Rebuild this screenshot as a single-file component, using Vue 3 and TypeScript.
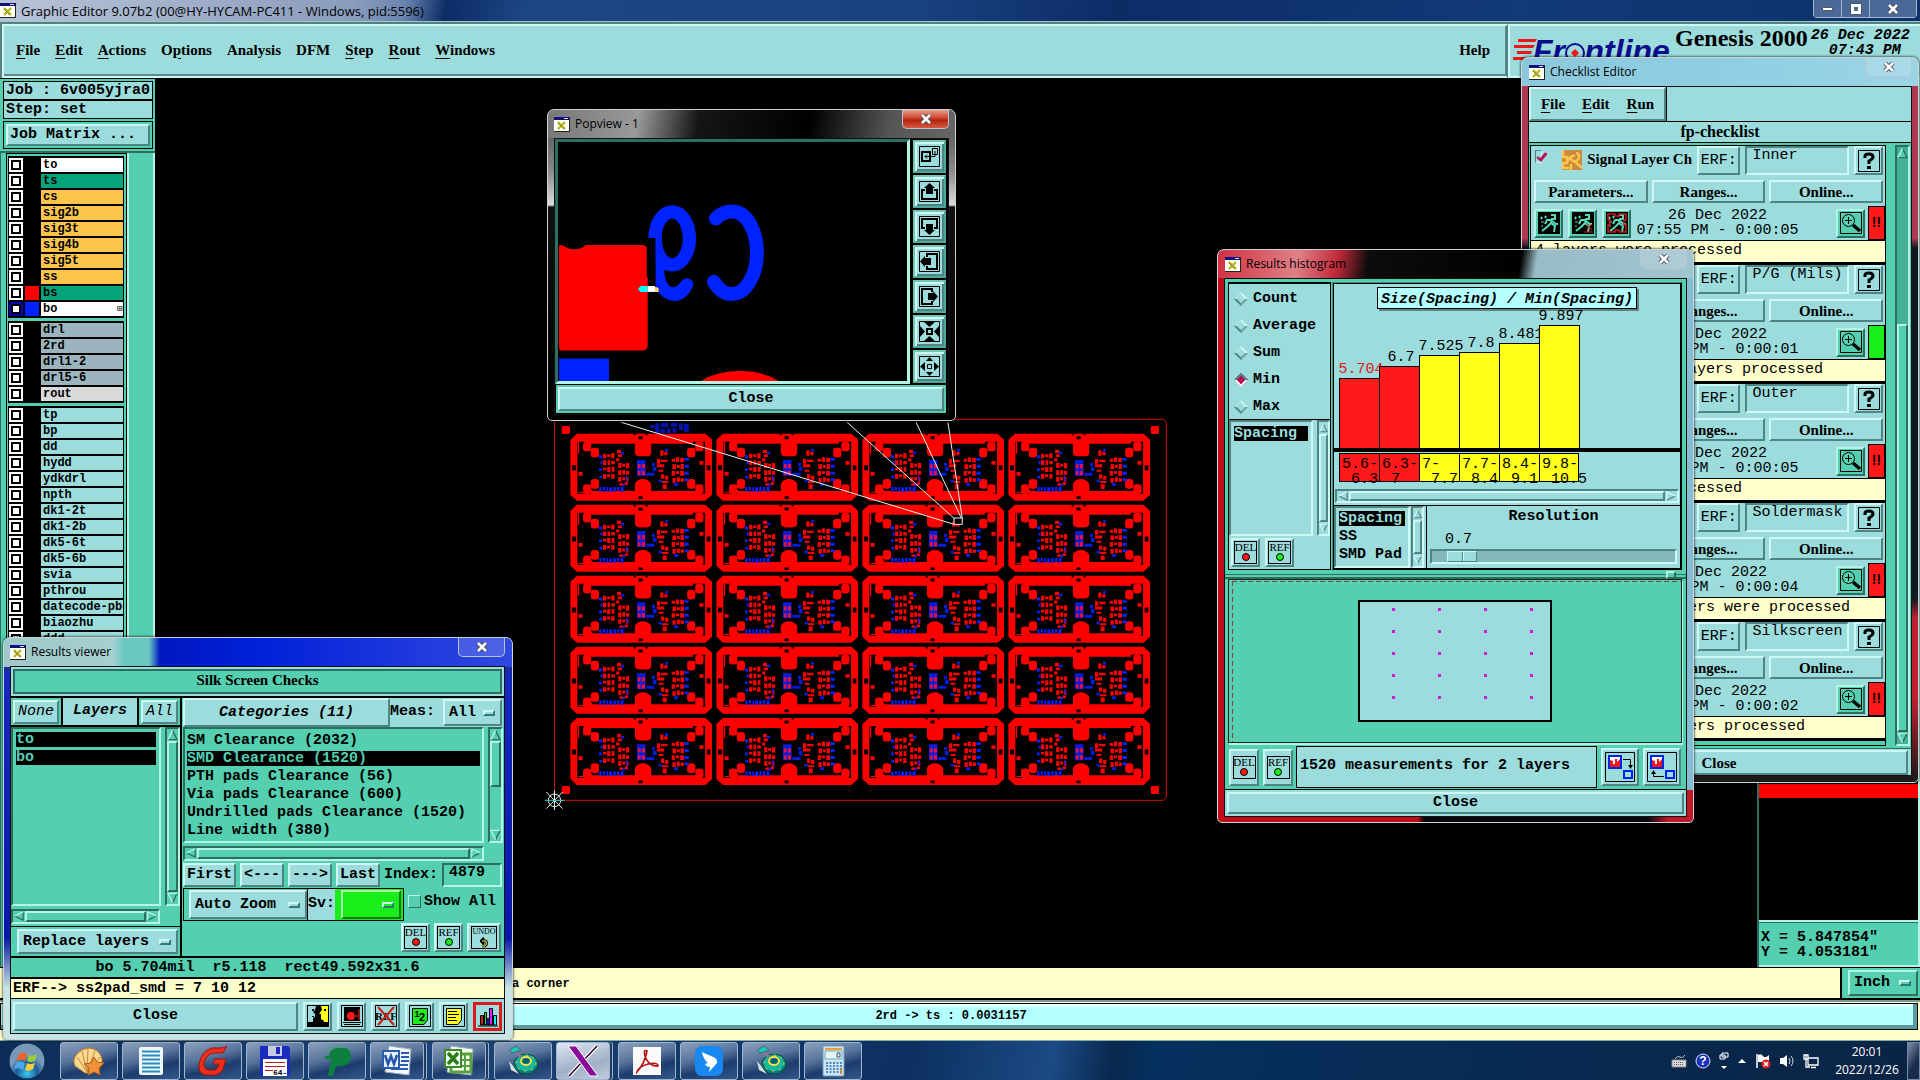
<script setup lang="ts">
import { ref } from 'vue'

interface Layer { name: string; bg: string; swatch?: string; active?: boolean }

const mk = (bg: string, names: string[]): Layer[] => names.map(name => ({ name, bg }))

const layerGroups: Layer[][] = [
  [
    { name: 'to', bg: '#ffffff' },
    { name: 'ts', bg: '#04a47c' },
    ...mk('#fdc54c', ['cs', 'sig2b', 'sig3t', 'sig4b', 'sig5t', 'ss']),
    { name: 'bs', bg: '#04a47c', swatch: '#ff0000' },
    { name: 'bo', bg: '#ffffff', swatch: '#0022ff', active: true },
  ],
  [...mk('#9cb4be', ['drl', '2rd', 'drl1-2', 'drl5-6']), { name: 'rout', bg: '#dadada' }],
  mk('#9cdcdc', ['tp', 'bp', 'dd', 'hydd', 'ydkdrl', 'npth', 'dk1-2t', 'dk1-2b', 'dk5-6t', 'dk5-6b',
    'svia', 'pthrou', 'datecode-pbc', 'biaozhu', 'ddd']),
]

const menus: [string, string, string][] = [
  ['', 'F', 'ile'], ['', 'E', 'dit'], ['', 'A', 'ctions'], ['O', 'p', 'tions'], ['Analysis', '', ''],
  ['DFM', '', ''], ['', 'S', 'tep'], ['', 'R', 'out'], ['', 'W', 'indows'],
]

const categories = ['SM Clearance (2032)', 'SMD Clearance (1520)', 'PTH pads Clearance (56)',
  'Via pads Clearance (600)', 'Undrilled pads Clearance (1520)', 'Line width (380)']

const checks = [
  { erf: 'Inner', time: '07:55 PM - 0:00:05', msg: '4 layers were processed', bad: true },
  { erf: 'P/G (Mils)', time: '07:55 PM - 0:00:01', msg: 'No power/ground layers processed', bad: false },
  { erf: 'Outer', time: '07:55 PM - 0:00:05', msg: '2 layers were processed', bad: true },
  { erf: 'Soldermask', time: '07:55 PM - 0:00:04', msg: '2 solder mask layers were processed', bad: true },
  { erf: 'Silkscreen', time: '07:55 PM - 0:00:02', msg: '2 silk screen layers processed', bad: true },
]

const stats = ['Count', 'Average', 'Sum', 'Min', 'Max']
const stat = ref('Min')
const bars = [
  { v: '5.704', h: 70, lo: '5.6-', hi: '6.3', red: true },
  { v: '6.7', h: 82, lo: '6.3-', hi: '7', red: true },
  { v: '7.525', h: 93, lo: '7-', hi: '7.7', red: false },
  { v: '7.8', h: 96, lo: '7.7-', hi: '8.4', red: false },
  { v: '8.481', h: 105, lo: '8.4-', hi: '9.1', red: false },
  { v: '9.897', h: 123, lo: '9.8-', hi: '10.5', red: false },
]
const resolution = ref(7)
const index = ref('4879')

const cells = Array.from({ length: 20 }, (_, i) => ({ x: 50 + (i % 4) * 357.7, y: 71 + Math.floor(i / 4) * 213.2 }))
const dots = Array.from({ length: 20 }, (_, i) => ({ x: 34 + (i % 4) * 46, y: 8 + Math.floor(i / 4) * 22 }))
const popIcons = ['i-dup', 'i-up', 'i-down', 'i-left', 'i-right', 'i-in', 'i-out']
const toolIcons = ['i-faces', 'i-cam', 'i-noref', 'i-half', 'i-note', 'i-chart']

const tasks = [
  { icon: 't-shell' }, { icon: 't-doc' }, { icon: 't-g' }, { icon: 't-disk' }, { icon: 't-p' },
  { icon: 't-word', stack: true }, { icon: 't-excel', stack: true }, { icon: 't-gen' },
  { icon: 't-x', stack: true, on: true }, { icon: 't-pdf' }, { icon: 't-bird' }, { icon: 't-gen' }, { icon: 't-calc' },
]
</script>

<template>
  <div class="desktop">
    <svg class="defs" width="0" height="0" aria-hidden="true">
      <symbol id="win" viewBox="0 0 16 15"><path d="M0 0H16V15H0Z" fill="#222" /><path d="M0 3H15V14H0Z" fill="#fff" /><path d="M0 0H15V3H0Z" fill="#10107c" /><path d="M10 1H14V2H10Z" fill="#ddd" /><path d="M4 5L11 12M11 5L4 12" stroke="#b8b818" stroke-width="2.4" /><path d="M4 6L10 12" stroke="#77770c" /></symbol>
      <symbol id="cls" viewBox="0 0 12 10"><path d="M2 1L10 9M10 1L2 9" stroke="#445" stroke-width="4.4" /><path d="M2 1L10 9M10 1L2 9" stroke="#fff" stroke-width="2.6" /></symbol>
      <symbol id="a-up" viewBox="0 0 12 12"><path d="M6 1L11 11H1Z" fill="var(--face)" /><path d="M1 11H11L6 1" fill="none" stroke="var(--dk)" stroke-width="1.5" /><path d="M6 1L1 11" stroke="var(--lt)" stroke-width="1.5" /></symbol>
      <symbol id="a-dn" viewBox="0 0 12 12"><path d="M1 1H11L6 11Z" fill="var(--face)" /><path d="M11 1L6 11" stroke="var(--dk)" stroke-width="1.5" /><path d="M11 1H1L6 11" fill="none" stroke="var(--lt)" stroke-width="1.5" /></symbol>
      <symbol id="a-lf" viewBox="0 0 12 12"><path d="M1 6L11 1V11Z" fill="var(--face)" /><path d="M11 1V11L1 6" fill="none" stroke="var(--dk)" stroke-width="1.5" /><path d="M1 6L11 1" stroke="var(--lt)" stroke-width="1.5" /></symbol>
      <symbol id="a-rt" viewBox="0 0 12 12"><path d="M1 1L11 6L1 11Z" fill="var(--face)" /><path d="M11 6L1 11" stroke="var(--dk)" stroke-width="1.5" /><path d="M1 11V1L11 6" fill="none" stroke="var(--lt)" stroke-width="1.5" /></symbol>

      <symbol id="i-dup" viewBox="0 0 21 21"><path d="M.5 .5H20.5V20.5H.5Z" fill="none" stroke="#000" /><path d="M3 6H11V15H3Z" fill="none" stroke="#000" stroke-width="2" /><path d="M13.500 2.500H18.500V8.500H13.500ZM16 5V10.500H6M8 8.500L6 10.500L8 12.500" fill="none" stroke="#000" /></symbol>
      <symbol id="i-up" viewBox="0 0 21 21"><path d="M.5 .5H20.500V20.500H.5Z" fill="none" stroke="#000" /><path d="M6 9H3V18H18V9H15" fill="none" stroke="#000" stroke-width="2" /><path d="M10.500 2L16 7H14V13H7V7H5Z" /></symbol>
      <symbol id="i-down" viewBox="0 0 21 21"><path d="M.5 .5H20.500V20.500H.5Z" fill="none" stroke="#000" /><path d="M6 12H3V3H18V12H15" fill="none" stroke="#000" stroke-width="2" /><path d="M10.500 19L5 14H7V8H14V14H16Z" /></symbol>
      <symbol id="i-left" viewBox="0 0 21 21"><path d="M.5 .5H20.500V20.500H.5Z" fill="none" stroke="#000" /><path d="M8 6V3H18V18H8V15" fill="none" stroke="#000" stroke-width="2" /><path d="M1 10.500L6 5V7H12V14H6V16Z" /></symbol>
      <symbol id="i-right" viewBox="0 0 21 21"><path d="M.5 .5H20.500V20.500H.5Z" fill="none" stroke="#000" /><path d="M13 6V3H3V18H13V15" fill="none" stroke="#000" stroke-width="2" /><path d="M19 10.500L14 5V7H9V14H14V16Z" /></symbol>
      <symbol id="i-in" viewBox="0 0 21 21"><path d="M.5 .5H20.500V20.500H.5Z" fill="none" stroke="#000" /><path d="M8 8H13V13H8Z" fill="none" stroke="#000" stroke-width="2" /><path d="M5 1H16L10.500 6ZM5 20H16L10.500 15ZM1 5V16L6 10.500ZM20 5V16L15 10.500Z" /></symbol>
      <symbol id="i-out" viewBox="0 0 21 21"><path d="M.5 .5H20.500V20.500H.5Z" fill="none" stroke="#000" /><path d="M8.500 8.500H12.500V12.500H8.500Z" fill="none" stroke="#000" /><path d="M7 5H14L10.500 1ZM7 16H14L10.500 20ZM6 6V15L1 10.500ZM15 6V15L20 10.500Z" /></symbol>

      <symbol id="i-faces" viewBox="0 0 22 22"><path d="M0 0H22V22H0Z" /><path d="M1 1H9L8 5L6 7L8 9V12L6 13V17H1Z" fill="#9cdcdc" /><path d="M21 1H14L15 5L12 9H14V14L17 16V17H21Z" fill="#ffff19" /><path d="M5 4H7V6H5ZM17 4H19V6H17ZM5 11H7V12H5Z" /></symbol>
      <symbol id="i-cam" viewBox="0 0 22 22"><path d="M.5 .5H21.500V21.500H.5Z" fill="#9cdcdc" stroke="#000" /><path d="M3 2H19V16H3ZM2 17H20V18H2ZM3 19H19V20H3Z" /><circle cx="10" cy="11" r="4" fill="#ff1919" /><path d="M13 10H17V4H19V15H17V12H13Z" fill="#8c1515" /></symbol>
      <symbol id="i-noref" viewBox="0 0 22 22"><path d="M.5 .5H21.500V21.500H.5Z" fill="none" stroke="#000" /><text x="11" y="15" font-family="Liberation Serif, serif" font-size="11" text-anchor="middle">REF</text><path d="M3 2L19 20M19 2L3 20" stroke="#d01818" stroke-width="2" /></symbol>
      <symbol id="i-half" viewBox="0 0 22 22"><path d="M.5 .5H21.500V21.500H.5Z" fill="none" stroke="#000" /><path d="M3.500 3.500H18.500V15L15 19.500H3.500Z" fill="#1aee1a" stroke="#000" /><text x="8" y="12" font-family="Liberation Sans, sans-serif" font-size="9" font-weight="bold" text-anchor="middle">1</text><text x="13" y="16" font-family="Liberation Sans, sans-serif" font-size="11" font-weight="bold" text-anchor="middle">2</text></symbol>
      <symbol id="i-note" viewBox="0 0 22 22"><path d="M.5 .5H21.500V21.500H.5Z" fill="none" stroke="#000" /><path d="M3.500 3.500H18.500V15L15 19.500H3.500Z" fill="#ffff19" stroke="#000" /><path d="M5 6.500H14M5 9.500H16M5 12.500H13M5 15.500H14" stroke="#000" /></symbol>
      <symbol id="i-chart" viewBox="0 0 22 22"><path d="M1 21H21" stroke="#000" /><path d="M3.500 10.500H6.500V20H3.500Z" fill="#d01818" stroke="#000" /><path d="M7.500 7.500H9.500V20H7.500Z" fill="#1aee1a" stroke="#000" /><path d="M9.500 13.500H12.500V20H9.500Z" fill="#1818d0" stroke="#000" /><path d="M12.500 3.500H15.500V20H12.500Z" fill="#ee1aee" stroke="#000" /><path d="M16.500 10.500H19.500V20H16.500Z" fill="#1aeeee" stroke="#000" /></symbol>

      <symbol id="i-run" viewBox="0 0 22 22"><path d="M13 3H17V7H14L13 11L17 14L16 20M13 11L9 15L4 19M14 8L9 8L7 12M14 9L18 12H20" fill="none" stroke="#58d8b8" stroke-width="2" /><path d="M2 6H5M3.500 4.500V7.500M6 5H9M7.500 3.500V6.500M3 10H6M3 14H5" stroke="#58d8b8" /></symbol>
      <symbol id="i-mag" viewBox="0 0 22 22"><path d="M.5 .5H21.500V21.500H.5Z" fill="none" stroke="#000" /><circle cx="8.500" cy="8.500" r="6" fill="none" stroke="#000" /><path d="M5 8.500H12M8.500 5V12" stroke="#000" /><path d="M13 13L20 19" stroke="#000" stroke-width="3.500" /></symbol>
      <symbol id="i-q" viewBox="0 0 22 22"><path d="M.5 .5H21.500V21.500H.5Z" fill="none" stroke="#000" /><path d="M7 8V6Q7 4 11 4Q15 4 15 7Q15 9 11 11V14" fill="none" stroke="#000" stroke-width="3" /><path d="M9 16H13V19H9Z" /></symbol>
      <symbol id="i-sig" viewBox="0 0 20 20"><path d="M0 0H20V20H0Z" fill="#c88a3c" /><path d="M1 0V7H5V13H1V18H7M8 7L4 14M13 6Q8 5 9 9Q11 13 16 10Q19 4 14 3M12 11L20 18M9 14V20" fill="none" stroke="#ffc44c" stroke-width="2.500" /></symbol>
      <symbol id="i-xa" viewBox="0 0 30 30"><path d="M.5 .5H29.500V29.500H.5Z" fill="none" stroke="#000" /><path d="M4 4H16V16H4Z" fill="#fff" stroke="#0022ee" stroke-width="2" /><path d="M5 8L8 9V12H10V7H12V10L15 7V15H5Z" fill="#f01818" /><path d="M19 19H27V26H19Z" fill="none" stroke="#0022ee" stroke-width="2" /><path d="M18 7.500H25.500V15" fill="none" stroke="#000" /><path d="M23 13H28L25.500 17Z" /></symbol>
      <symbol id="i-xb" viewBox="0 0 30 30"><path d="M.5 .5H29.500V29.500H.5Z" fill="none" stroke="#000" /><path d="M4 4H16V16H4Z" fill="#fff" stroke="#0022ee" stroke-width="2" /><path d="M5 8L8 9V12H10V7H12V10L15 7V15H5Z" fill="#f01818" /><path d="M19 19H27V26H19Z" fill="none" stroke="#0022ee" stroke-width="2" /><path d="M17 24.500H6.500V20" fill="none" stroke="#000" /><path d="M4 22H9L6.500 18Z" /></symbol>

      <symbol id="t-shell" viewBox="0 0 32 32"><path d="M12 28L2 21Q-1 14 4 9Q9 3 16 3Q25 4 28 11Q31 18 26 24L18 28Z" fill="#f9d890" stroke="#c07820" /><path d="M14 27L4 12M14 27L9 6M14 27L15 4M14 27L22 6M14 27L27 12" stroke="#c88a3a" /><path d="M21 12L24 17L31 18L26 23L27 30L21 27L15 30L16 23L11 19L18 18Z" fill="#f29238" stroke="#b05c18" /></symbol>
      <symbol id="t-doc" viewBox="0 0 32 32"><rect x="4" y="2" width="24" height="28" rx="2" fill="#eef6fa" /><path d="M7 6.500H25M7 10.500H25M7 14.500H25M7 18.500H25M7 22.500H25M7 26.500H25" stroke="#2a8cba" stroke-width="2" /></symbol>
      <symbol id="t-g" viewBox="0 0 32 32"><path d="M30 1L26 8H17Q9 9 7 18Q6 24 12 25H18Q21 24 22 19H16L18 14H29L26 24Q24 29 18 30H9Q1 29 2 20Q4 6 15 3H23Q28 3 30 1Z" fill="#e8301c" stroke="#a81008" /></symbol>
      <symbol id="t-disk" viewBox="0 0 32 32"><path d="M1 1H29L31 3V31H1Z" fill="#1a2cc0" /><path d="M9 1H23V11H9Z" fill="#c8cce0" /><path d="M17 2H21V9H17Z" fill="#1a2cc0" /><path d="M4 14H28V31H4Z" fill="#fff" /><path d="M6 17.500H26M6 21.500H26M6 25.500H14" stroke="#b02020" /><text x="14" y="30" font-family="Liberation Mono, monospace" font-size="8">64-</text></symbol>
      <symbol id="t-p" viewBox="0 0 32 32"><path d="M7 31L10 14H4V11H8Q9 3 17 3H25Q31 6 30 13Q28 21 19 21H15L12 31Z" fill="#0c8040" /><path d="M4 9Q5 2 12 2H24" fill="none" stroke="#3caa68" /></symbol>
      <symbol id="t-word" viewBox="0 0 32 32"><path d="M8 1L30 4L28 30L4 27Z" fill="#f4f8ff" stroke="#9ab" /><path d="M2 6H18V23H2Z" fill="#e8f0ff" stroke="#2a5cb0" stroke-width="2" /><path d="M4 10L7 19L10 11L13 19L16 10" fill="none" stroke="#2456a8" stroke-width="2.500" /><path d="M20 8H28M20 12H28M20 16H28M19 20H27M10 24H27" stroke="#2a5cb0" stroke-width="2" /></symbol>
      <symbol id="t-excel" viewBox="0 0 32 32"><path d="M8 1L30 4L28 30L4 27Z" fill="#f4fff4" stroke="#9ab" /><path d="M17 9H28V27H8V22" fill="none" stroke="#5aa03c" stroke-width="3" /><path d="M18 15H28M18 21H28M22 9V27" stroke="#5aa03c" stroke-width="2" /><path d="M2 5H18V22H2Z" fill="#f0fff0" stroke="#3c8a28" stroke-width="2" /><path d="M5 8L15 19M15 8L5 19" stroke="#2c7a18" stroke-width="3.500" /></symbol>
      <symbol id="t-gen" viewBox="0 0 32 32"><path d="M2 16L7 22L12 29L4 25Z" fill="#ddd" /><ellipse cx="19" cy="19" rx="12" ry="10" fill="#0c7c78" stroke="#054" /><ellipse cx="19" cy="18" rx="10" ry="8" fill="#18b89c" stroke="#f0e050" stroke-dasharray="2 5" /><ellipse cx="19" cy="16" rx="5" ry="4" fill="#067" stroke="#ffe040" stroke-width="2" /><path d="M2 5L9 1L14 5L6 8Z" fill="#1cc8b0" stroke="#468" /><path d="M9 8L14 12" stroke="#879" stroke-width="3" /></symbol>
      <symbol id="t-x" viewBox="0 0 32 32"><path d="M30 1L2 31" stroke="#fff" stroke-width="4" /><path d="M30 1L2 31" stroke="#303" stroke-width="1.500" /><path d="M1 1H9L31 31H23Z" fill="#8a0a9a" stroke="#fff" /></symbol>
      <symbol id="t-pdf" viewBox="0 0 32 32"><path d="M2 2H30V30H2Z" fill="#fafafa" /><path d="M6 27Q14 18 16 6Q12 4 14 11Q18 22 27 21Q27 17 17 19Q7 22 6 27Z" fill="none" stroke="#b81414" stroke-width="1.600" /></symbol>
      <symbol id="t-bird" viewBox="0 0 32 32"><rect x="2" y="1" width="28" height="30" rx="7" fill="#1888f0" /><path d="M9 7Q10 14 15 18L12 19Q13 22 17 22L16 27L24 18Q25 13 18 11Q13 9 9 7Z" fill="#fff" /></symbol>
      <symbol id="t-calc" viewBox="0 0 32 32"><rect x="6" y="1" width="21" height="30" rx="1" fill="#cfe4f4" stroke="#6a9cc0" /><path d="M8 3H25V5H8Z" fill="#f0a030" /><path d="M8 6H25V14H8Z" fill="#e8f4fc" stroke="#7aa" /><path d="M20 8H23V12H20Z" fill="none" stroke="#357" /><path d="M9 18H25M9 21H25M9 24H25M9 27H25" stroke="#4c88b8" stroke-width="2" stroke-dasharray="2 1.500" /><path d="M23 24H25V29H23Z" fill="#e08820" /></symbol>

      <symbol id="cell" overflow="visible">
        <path d="M16 0H331L347 18V183L331 201H16L0 183V18Z" fill="#f00" />
        <path d="M17 24H34V30H158V58Q160 68 170 68H186Q197 68 198 58V30H300V24H330V180H316V172H198V150Q190 136 178 136Q164 136 158 150V172H50V180H17Z" fill="#000" />
        <path d="M167 8H177V17H167ZM167 188H177V196H167ZM4 95H14V110H4ZM334 95H343V110H334ZM155 0H160V5H155ZM184 0H189V5H184Z" fill="#000" />
        <path d="M20 176H52V168M20 24V60" fill="none" stroke="#f00" stroke-width="3" />
        <g fill="#f00">
          <rect v-for="(c, k) in [[31, 24], [50, 42], [286, 42], [306, 24], [50, 136], [31, 152], [286, 136], [306, 152]]" :key="k" :x="c[0]" :y="c[1]" width="20" height="29" rx="8" />
          <path d="M20 115H30V126H20ZM316 82H326V93H316Z" />
          <path d="M80 60h8v14h-8zM90 62h8v8h-8zM100 59h8v15h-8zM80 80h8v14h-8zM91 80h6v14h-6zM100 82h9v10h-9zM80 102h8v8h-8zM90 100h8v15h-8zM101 100h7v14h-7zM80 121h8v14h-8zM90 122h7v9h-7zM100 121h8v14h-8z" />
          <path d="M114 48h10v10h-10zM116 62h10v8h-10zM112 74h8v9h-8zM117 88h8v15h-8zM127 90h7v9h-7zM136 88h8v16h-8zM117 110h8v14h-8zM127 109h7v14h-7zM136 112h8v11h-8zM117 130h8v14h-8zM127 131h7v9h-7zM136 130h6v14h-6zM120 149h10v7h-10zM133 146h8v8h-8z" />
          <path d="M220 50h8v16h-8zM230 55h8v10h-8zM212 76h8v14h-8zM222 78h16v7h-16zM212 92h18v9h-18zM216 108h12v6h-12zM222 122h8v13h-8zM232 126h8v12h-8zM224 142h16v6h-16zM226 152h10v14h-10z" />
          <path d="M248 75h8v9h-8zM258 71h8v14h-8zM269 72h9v14h-9zM250 92h9v14h-9zM261 94h7v9h-7zM270 91h8v15h-8zM248 112h8v14h-8zM258 113h8v8h-8zM269 112h9v14h-9zM250 133h8v14h-8zM261 131h7v14h-7zM270 134h8v10h-8z" />
        </g>
        <g fill="#0022ff">
          <path d="M163 79h21v48h-21zM186 117h20v9h-20zM200 87h7v10h-7zM202 99h9v13h-9zM124 54h8v8h-8zM232 45h7v9h-7zM136 126h4v16h-4zM128 150h6v8h-6zM216 138h8v8h-8zM254 148h10v9h-10z" fill-opacity=".85" />
          <path d="M70 65h8v9h-8zM74 83h5v9h-5zM70 104h7v8h-7zM71 126h7v8h-7zM279 73h11v8h-11zM280 93h10v9h-10zM279 114h11v9h-11zM280 134h10v8h-10z" />
          <path d="M71 160h5v14h-5zM79 160h6v9h-6zM79 171h6v3h-6zM88 160h4v14h-4zM95 161h7v13h-7zM105 160h6v14h-6zM114 160h6v11h-6zM123 160h7v14h-7z" />
        </g>
        <path d="M165 91h7v13h-7zM175 91h8v13h-8zM165 112h7v13h-7zM175 112h8v13h-8z" fill="#e0104c" />
      </symbol>
    </svg>

    <header class="apptitle">
      <svg class="wi"><use href="#win" /></svg>
      <span class="cap">Graphic Editor 9.07b2 (00@HY-HYCAM-PC411 - Windows, pid:5596)</span>
      <div class="sysbtns">
        <button type="button" aria-label="Minimize"><i class="min"></i></button>
        <button type="button" aria-label="Restore"><i class="rst"></i></button>
        <button type="button" aria-label="Close" class="wide"><svg class="x"><use href="#cls" /></svg></button>
      </div>
    </header>

    <div class="topbar">
      <nav class="menubar">
        <button v-for="m in menus" :key="m.join('')" type="button">{{ m[0] }}<u>{{ m[1] }}</u>{{ m[2] }}</button>
        <button type="button" class="help">Help</button>
      </nav>
      <div class="brand">
        <svg class="logo" width="160" height="40" viewBox="0 0 160 40">
          <path d="M5 2H24L22 5H5ZM1 8H22L20 11H1ZM4 14H19L18 17H4ZM0 20H16L15 23H0Z" fill="#f01414" />
          <text x="20" y="25" font-family="Liberation Sans, Arial, sans-serif" font-size="32" font-weight="bold" font-style="italic" fill="#0c0c8c">Frontline</text>
          <circle cx="62" cy="16" r="9" fill="#9cdcdc" stroke="#0c0c8c" stroke-width="2" /><path d="M62 12L66 16L62 20L58 16Z" fill="#f01414" />
        </svg>
        <strong>Genesis 2000</strong>
        <em>26 Dec 2022<br>07:43 PM&nbsp;</em>
      </div>
    </div>

    <main class="work">
      <aside class="side">
        <div class="jobs">
          <p>Job : 6v005yjra0</p>
          <p>Step: set</p>
          <div class="jm"><button type="button" class="btn">Job Matrix ...</button></div>
        </div>
        <div class="layers">
          <div class="frame">
            <ul v-for="(g, gi) in layerGroups" :key="gi">
              <li v-for="l in g" :key="l.name" :class="{ act: l.active }">
                <input type="checkbox" :aria-label="l.name">
                <i :style="{ background: l.swatch || '#000' }"></i>
                <span :style="{ background: l.bg }">{{ l.name }}<small v-if="l.active">⊞</small></span>
              </li>
            </ul>
          </div>
        </div>
      </aside>

      <section class="canvas">
        <svg class="pcb" width="640" height="410" viewBox="0 0 1568 1230" preserveAspectRatio="none" overflow="visible">
          <path d="M11 28H1503L1510 38V1162L1503 1171H11Z" fill="none" stroke="#d80c0c" stroke-width="1" vector-effect="non-scaling-stroke" />
          <g fill="#f00">
            <rect x="29" y="48" width="20" height="24" rx="4" /><rect x="1472" y="48" width="20" height="24" rx="4" />
            <rect x="29" y="1128" width="20" height="24" rx="4" /><rect x="1472" y="1128" width="20" height="24" rx="4" />
          </g>
          <path d="M245 45h12v10h-12zM258 40h10v28h-10zM272 38h18v14h-18zM270 56h12v14h-12zM286 55h10v15h-10zM296 38h16v12h-16zM300 54h10v14h-10zM316 40h10v20h-10zM328 42h12v24h-12z" fill="#0014a8" />
          <use v-for="(c, i) in cells" :key="i" href="#cell" :x="c.x" :y="c.y" />
          <g stroke="#e8f0f0" fill="none" stroke-width="1">
            <path vector-effect="non-scaling-stroke" d="M175 37L990 343M728 37L990 325M897 37L1008 325M975 37L1010 325" />
            <path vector-effect="non-scaling-stroke" fill="#000" d="M990 324H1010V343H990Z" />
            <path vector-effect="non-scaling-stroke" d="M11 1142V1200M-9 1146L31 1196M31 1146L-9 1196" />
            <ellipse vector-effect="non-scaling-stroke" cx="11" cy="1171" rx="15" ry="19" />
            <path vector-effect="non-scaling-stroke" stroke="#30d0d0" d="M-12 1171H36" />
          </g>
        </svg>
      </section>

      <aside class="rside">
        <div class="over"><i></i></div>
        <p class="xy">X = 5.847854"<br>Y = 4.053181"</p>
      </aside>
    </main>

    <div class="msgrow">
      <p>a corner</p>
      <div class="unit"><label class="opt"><select aria-label="Units"><option>Inch</option></select></label></div>
    </div>
    <div class="inforow"><p>2rd -&gt; ts : 0.0031157</p></div>

    <!-- Popview -->
    <section class="win pop">
      <header><svg class="wi"><use href="#win" /></svg><span class="cap">Popview - 1</span><button type="button" class="wc red" aria-label="Close"><svg class="x"><use href="#cls" /></svg></button></header>
      <div class="client">
        <div class="poprow">
          <div class="view">
            <svg viewBox="50 123 1058 722" preserveAspectRatio="xMinYMin slice">
              <path d="M53 435H65Q80 447 98 447Q120 447 134 434H305Q321 436 321 450V740Q319 752 305 753H60Q53 752 53 745Z" fill="#f00" />
              <path d="M53 777H204V845H53Z" fill="#0022ff" />
              <path d="M482 845Q530 815 600 815Q670 815 716 845Z" fill="#f00" />
              <g fill="none" stroke="#0022ff" stroke-width="42" stroke-linecap="round">
                <path d="M527 354Q548 333 575 333C625 333 651 400 651 458C651 520 620 582 575 582Q543 582 521 545" />
                <ellipse cx="395" cy="414" rx="52" ry="80" stroke-width="40" />
              </g>
              <path d="M318 413H345V530H318Z" fill="#000" />
              <path d="M345 405H363L370 500Q372 562 400 562Q410 560 424 542A20 20 0 0 1 459 555Q440 603 400 603Q362 600 345 560Z" fill="#0022ff" />
              <path d="M300 558H321V576H300L291 567Z" fill="#0ff" /><path d="M321 558H343V576H321Z" fill="#fff" /><path d="M343 560L354 564V576H343Z" fill="#ffd060" />
            </svg>
          </div>
          <div class="tools"><button v-for="n in popIcons" :key="n" type="button" class="btn" :aria-label="n"><svg width="21" height="21"><use :href="'#' + n" /></svg></button></div>
        </div>
        <div class="pclose"><button type="button" class="btn">Close</button></div>
      </div>
    </section>

    <!-- Checklist editor -->
    <section class="win check">
      <header><svg class="wi"><use href="#win" /></svg><span class="cap">Checklist Editor</span><button type="button" class="wc" aria-label="Close"><svg class="x"><use href="#cls" /></svg></button></header>
      <div class="client">
        <div class="cmenu"><nav><button type="button"><u>F</u>ile</button><button type="button"><u>E</u>dit</button><button type="button"><u>R</u>un</button></nav></div>
        <h2>fp-checklist</h2>
        <div class="clist">
          <div class="items">
            <article v-for="(c, i) in checks" :key="c.erf">
              <div class="r1">
                <label><input type="checkbox" checked><svg width="20" height="20"><use href="#i-sig" /></svg><span>Signal Layer Ch</span></label>
                <button type="button" class="btn erf">ERF:</button>
                <input class="fld" type="text" :value="c.erf" :aria-label="'ERF ' + (i + 1)">
                <button type="button" class="btn q" aria-label="Help"><svg width="22" height="22"><use href="#i-q" /></svg></button>
              </div>
              <div class="r2"><button type="button" class="btn">Parameters...</button><button type="button" class="btn">Ranges...</button><button type="button" class="btn">Online...</button></div>
              <div class="r3">
                <button v-for="k in 3" :key="k" type="button" class="btn run" :aria-label="'Run ' + k"><svg width="22" height="22" viewBox="0 0 22 22"><use href="#i-run" width="22" height="22" /><path v-if="k === 2" d="M15 12L20 18M20 12L15 18M12 20H21" stroke="#d01818" /><path v-if="k === 3" d="M2 2H9V4H13V2H20V8H18V13H20V20H13V18H9V20H2V13H4V8H2Z" fill="none" stroke="#d01818" stroke-width="1.500" /></svg></button>
                <p>26 Dec 2022<br>{{ c.time }}</p>
                <button type="button" class="btn mag" aria-label="Results"><svg width="22" height="22"><use href="#i-mag" /></svg></button>
                <b :class="{ bad: c.bad }">{{ c.bad ? '!!' : '' }}</b>
              </div>
              <p class="m">{{ c.msg }}</p>
            </article>
          </div>
          <div class="sb v"><svg><use href="#a-up" /></svg><b class="low"></b><svg><use href="#a-dn" /></svg></div>
        </div>
        <div class="cclose"><button type="button" class="btn">Close</button></div>
      </div>
    </section>

    <!-- Results histogram -->
    <section class="win hist">
      <header><svg class="wi"><use href="#win" /></svg><span class="cap">Results histogram</span><button type="button" class="wc" aria-label="Close"><svg class="x"><use href="#cls" /></svg></button></header>
      <div class="client">
        <div class="htop">
          <div class="hleft cy">
            <div class="radios"><label v-for="s in stats" :key="s"><input v-model="stat" type="radio" name="stat" :value="s">{{ s }}</label></div>
            <div class="lrow"><ul class="lb"><li class="on">Spacing</li></ul><div class="sb v"><svg><use href="#a-up" /></svg><b></b><svg><use href="#a-dn" /></svg></div></div>
            <div class="drs"><button type="button" class="btn dr"><span>DEL<i class="r"></i></span></button><button type="button" class="btn dr"><span>REF<i></i></span></button></div>
          </div>
          <div class="hright cy">
            <div class="ttl"><em>Size(Spacing) / Min(Spacing)</em></div>
            <div class="bars"><div v-for="b in bars" :key="b.v" :class="{ red: b.red }"><span>{{ b.v }}</span><i :style="{ height: b.h + 'px' }"></i></div></div>
            <div class="lbls"><div v-for="b in bars" :key="b.v" :class="{ red: b.red }"><span>{{ b.lo }}</span><span class="hi">{{ b.hi }}</span></div></div>
            <div class="sb h"><svg><use href="#a-lf" /></svg><b></b><svg><use href="#a-rt" /></svg></div>
            <div class="res">
              <ul class="lb"><li class="on">Spacing</li><li>SS</li><li>SMD Pad</li></ul>
              <div class="sb v"><svg><use href="#a-up" /></svg><b></b><svg><use href="#a-dn" /></svg></div>
              <div class="sl"><label for="reso">Resolution</label><output>{{ (resolution / 10).toFixed(1) }}</output><input id="reso" v-model="resolution" type="range" min="0" max="100"></div>
            </div>
          </div>
        </div>
        <div class="sash"><i></i></div>
        <div class="map"><svg width="194" height="122"><path d="M1 1H193V121H1Z" fill="#9cdcdc" stroke="#000" stroke-width="2" /><rect v-for="(d, i) in dots" :key="i" :x="d.x" :y="d.y" width="3" height="3" fill="#c81cd8" /></svg></div>
        <div class="hinfo cy">
          <button type="button" class="btn dr"><span>DEL<i class="r"></i></span></button><button type="button" class="btn dr"><span>REF<i></i></span></button>
          <p>1520 measurements for 2 layers</p>
          <button type="button" class="btn xb" aria-label="Export"><svg width="30" height="30"><use href="#i-xa" /></svg></button><button type="button" class="btn xb" aria-label="Import"><svg width="30" height="30"><use href="#i-xb" /></svg></button>
        </div>
        <div class="hclose"><button type="button" class="btn">Close</button></div>
      </div>
    </section>

    <!-- Results viewer -->
    <section class="win rv">
      <header><svg class="wi"><use href="#win" /></svg><span class="cap">Results viewer</span><button type="button" class="wc" aria-label="Close"><svg class="x"><use href="#cls" /></svg></button></header>
      <div class="client">
        <h2>Silk Screen Checks</h2>
        <div class="rvmid">
          <div class="rl">
            <div class="rh"><div class="g"><button type="button" class="btn it">None</button></div><em>Layers</em><div class="g"><button type="button" class="btn it">All</button></div></div>
            <div class="lrow"><ul class="lb"><li class="on">to</li><li class="on">bo</li></ul><div class="sb v"><svg><use href="#a-up" /></svg><b></b><svg><use href="#a-dn" /></svg></div></div>
            <div class="sb h"><svg><use href="#a-lf" /></svg><b></b><svg><use href="#a-rt" /></svg></div>
            <div class="rep"><label class="opt"><select aria-label="Layer mode"><option>Replace layers</option></select></label></div>
          </div>
          <div class="rr">
            <div class="rh"><button type="button" class="btn cat">Categories (11)</button><label class="ms" for="meas">Meas:</label><div class="opt"><select id="meas"><option>All</option></select></div></div>
            <div class="lrow"><ul class="lb"><li v-for="(c, i) in categories" :key="c" :class="{ on: i === 1 }">{{ c }}</li></ul><div class="sb v"><svg><use href="#a-up" /></svg><b class="hi3"></b><svg><use href="#a-dn" /></svg></div></div>
            <div class="sb h"><svg><use href="#a-lf" /></svg><b></b><svg><use href="#a-rt" /></svg></div>
            <div class="nav"><button type="button" class="btn">First</button><button type="button" class="btn">&lt;---</button><button type="button" class="btn">---&gt;</button><button type="button" class="btn">Last</button><label for="idx">Index:</label><input id="idx" v-model="index" type="text"></div>
            <div class="zoom">
              <div class="zb"><div class="opt az"><select aria-label="Zoom mode"><option>Auto Zoom</option></select></div><label for="sv">Sv:</label><div class="gr"><div class="opt"><select id="sv"><option></option></select></div></div></div>
              <label class="sa"><input type="checkbox">Show All</label>
            </div>
            <div class="drs"><button type="button" class="btn dr"><span>DEL<i class="r"></i></span></button><button type="button" class="btn dr"><span>REF<i></i></span></button><button type="button" class="btn dr un"><span>UNDO<svg width="9" height="11" viewBox="0 0 9 11"><path d="M2 9H5Q8 7 6 4H2M4 1L1 4L4 7" fill="none" stroke="#000" stroke-width="2.500" /><path d="M2 9H5Q8 7 6 4H2" fill="none" stroke="#ff1" /></svg></span></button></div>
          </div>
        </div>
        <p class="ri">bo 5.704mil&nbsp; r5.118&nbsp; rect49.592x31.6</p>
        <p class="re">ERF--&gt; ss2pad_smd = 7 10 12</p>
        <div class="rb"><button type="button" class="btn cl">Close</button><button v-for="n in toolIcons" :key="n" type="button" class="btn ic" :class="n" :aria-label="n"><svg width="22" height="22"><use :href="'#' + n" /></svg></button></div>
      </div>
    </section>

    <footer class="taskbar">
      <button type="button" class="orb" aria-label="Start"><svg width="40" height="38" viewBox="0 0 40 38"><defs><radialGradient id="og" cy=".85"><stop offset="0" stop-color="#38c8f0" /><stop offset=".6" stop-color="#1c5a98" /><stop offset="1" stop-color="#7898b8" /></radialGradient></defs><circle cx="20" cy="19" r="18" fill="url(#og)" stroke="#0a2a50" /><path d="M12 12Q15 9 20 12L18 19Q14 16 9 19Z" fill="#f0602c" /><path d="M22 13Q25 15 30 12L28 19Q24 21 20 19Z" fill="#9ccc3c" /><path d="M9 21Q13 18 18 21L16 28Q12 25 7 27Z" fill="#48a8ec" /><path d="M20 21Q23 23 28 21L26 27Q22 30 18 28Z" fill="#fccc3c" /></svg></button>
      <button v-for="(t, i) in tasks" :key="i" type="button" class="task" :class="{ stack: t.stack, on: t.on }" :aria-label="'Task ' + (i + 1)"><span><svg width="32" height="32"><use :href="'#' + t.icon" /></svg></span></button>
      <div class="tray">
        <svg width="16" height="16" viewBox="0 0 16 16"><path d="M1 7H15V14H1Z" fill="#ddd" stroke="#888" /><path d="M3 9.500H13M3 11.500H13" stroke="#555" stroke-dasharray="1 1" /><path d="M4 6Q6 2 9 4T14 2" fill="none" stroke="#bbb" /></svg>
        <svg width="16" height="16" viewBox="0 0 16 16"><circle cx="8" cy="8" r="7" fill="#1a30b8" stroke="#dde" /><text x="8" y="12" text-anchor="middle" font-size="12" font-weight="bold" font-family="Liberation Sans, sans-serif" fill="#fff">?</text></svg>
        <svg width="10" height="20" viewBox="0 0 10 20"><path d="M3 2H9V6H3ZM1 4H6V8H1Z" fill="#0a2a5a" stroke="#fff" /><path d="M2 15H8L5 18Z" fill="#fff" /></svg>
        <svg width="10" height="16" viewBox="0 0 10 16"><path d="M1 10L5 6L9 10Z" fill="#fff" /></svg>
        <svg width="16" height="16" viewBox="0 0 16 16"><path d="M2 1V15" stroke="#fff" stroke-width="1.500" /><path d="M3 2Q6 0 8 3T14 2V9H3Z" fill="#fff" /><circle cx="11" cy="11" r="4.500" fill="#d82020" /><path d="M9 9L13 13M13 9L9 13" stroke="#fff" stroke-width="1.500" /></svg>
        <svg width="16" height="16" viewBox="0 0 16 16"><path d="M1 5H4L8 2V14L4 11H1Z" fill="#fff" /><path d="M10 5Q12 8 10 11M12 3Q16 8 12 13" fill="none" stroke="#ddd" /></svg>
        <svg width="16" height="16" viewBox="0 0 16 16"><path d="M5 5H15V12H5ZM8 14.500H13M3 2V14H7M1 2H5V6H1Z" fill="none" stroke="#fff" stroke-width="1.300" /></svg>
      </div>
      <time>20:01<br>2022/12/26</time>
      <i class="show"></i>
    </footer>
  </div>
</template>

<style>
html, body { background: #000; }
</style>

<style scoped>
*, *::after { box-sizing: border-box; margin: 0; padding: 0; }
.desktop {
  --face: #54cfb0; --lt: #b4f4e4; --dk: #2c6e60;
  --cy: #9cdcdc; --clt: #cdf8f6; --cdk: #4f8484;
  position: relative; min-height: 100vh; display: flex; flex-direction: column; overflow: hidden;
  background: #000; color: #000; font: bold 15px/18px "Liberation Mono", monospace;
}
.defs { position: absolute; }
button, select, input { font: inherit; color: inherit; border: 0; background: none; border-radius: 0; appearance: none; white-space: nowrap; }
ul { list-style: none; }
svg { display: block; flex: none; }
.cy, .menubar, .brand, .check .client { --face: #9cdcdc; --lt: #cdf8f6; --dk: #4f8484; }
.btn { background: var(--cy); border: 2px solid; border-color: var(--clt) var(--cdk) var(--cdk) var(--clt); display: flex; align-items: center; justify-content: center; }
.wi { width: 16px; height: 15px; }
.x { width: 12px; height: 10px; }
.cap { font: 12px/16px "Open Sans", sans-serif; white-space: nowrap; }

.apptitle { height: 22px; display: flex; align-items: center; gap: 5px; background: linear-gradient(100deg, #b8c4d8 0, #8a9cbc 350px, #6a84b0 400px, #0c2c66 440px, #1e4684 520px, #1a4280 900px, #0c2c66 1100px, #123a78 1500px, #0e3068 100%); border-bottom: 1px solid #9cc; }
.apptitle .cap { font-size: 13px; }
.sysbtns { margin: 0 3px auto auto; display: flex; height: 18px; border: 1px solid #a8b8d0; border-top: 0; border-radius: 0 0 4px 4px; }
.sysbtns button { width: 28px; display: grid; place-items: center; background: #4a6898; border-right: 1px solid #a8b8d0; }
.sysbtns .wide { width: 46px; border: 0; }
.min { width: 11px; height: 4px; background: #fff; border: 1px solid #556; }
.rst { width: 10px; height: 10px; border: 3px solid #fff; outline: 1px solid #556; }

.topbar { display: flex; height: 56px; background: #55807f; padding: 2px 0 0; }
.menubar { flex: 1; display: flex; align-items: center; gap: 15px; padding: 0 16px 3px 12px; margin-left: 2px; background: var(--cy); border: 2px solid; border-color: var(--clt) var(--cdk) var(--clt) var(--clt); font: bold 15px/18px "Liberation Serif", serif; box-shadow: inset -1px -2px #5a8c8c; }
.menubar u, .cmenu u { text-underline-offset: 3px; }
.help { margin-left: auto; }
.brand { width: 412px; background: var(--cy); border: 2px solid var(--clt); border-right: 0; display: flex; align-items: flex-start; overflow: hidden; }
.logo { margin: 11px 2px 0 3px; }
.brand strong { font: bold 24px/24px "Liberation Serif", serif; white-space: nowrap; }
.brand em { font: italic bold 15px/15px "Liberation Mono", monospace; white-space: nowrap; margin: 2px 0 0 3px; text-align: right; }

.work { flex: 1; display: flex; min-height: 0; height: 0; overflow: hidden; }
.side { width: 155px; display: flex; flex-direction: column; background: #54cfb0; overflow: hidden; }
.jobs { padding: 2px 2px 2px 3px; border-bottom: 2px solid #2c6e60; border-top: 1px solid #000; }
.jobs p { background: var(--cy); border: 1px solid #000; padding-left: 2px; font: bold 15px/17px "Liberation Mono", monospace; white-space: nowrap; overflow: hidden; height: 19px; }
.jm { margin-top: 2px; border: 1px solid #000; padding: 2px; }
.jm .btn { width: 100%; height: 22px; justify-content: flex-start; padding-left: 2px; }
.layers { flex: 1; padding-left: 5px; border-left: 1px solid #2c6e60; border-right: 2px solid #b4f4e4; min-height: 0; overflow: hidden; }
.frame { width: 121px; padding: 2px 2px 0 1px; border: 1px solid #000; border-bottom: 0; box-shadow: 2px 0 #b4f4e4; }
.frame ul { background: #000; padding: 2px 1px 0; margin-bottom: 3px; }
.frame li { display: flex; gap: 2px; height: 16px; padding-bottom: 2px; }
.frame li input { width: 14px; height: 14px; background: #000; border: 2px solid #fff; display: block; box-shadow: inset 0 0 0 2px #000, inset 0 0 0 5px #fff; }
.frame li.act input { border-color: #0000b0; }
.frame li i { width: 14px; }
.frame li span { flex: 1; padding-left: 2px; font: bold 12px/14px "Liberation Mono", monospace; overflow: hidden; display: flex; justify-content: space-between; white-space: nowrap; }
.frame small { font: 8px/14px "DejaVu Sans", sans-serif; }
.canvas { flex: 1; position: relative; border-top: 1px solid #000; }
.pcb { position: absolute; left: 395px; top: 331px; }
.rside { width: 163px; display: flex; flex-direction: column; border-left: 2px solid #2c6e60; border-right: 2px solid #b4f4e4; }
.over { flex: 1; border-bottom: 2px solid #b4f4e4; }
.over i { display: block; height: 14px; margin-top: 706px; background: #f00; }
.xy { height: 45px; background: #54cfb0; border-top: 1px solid #2c6e60; border-bottom: 2px solid #b4f4e4; padding: 7px 2px; line-height: 15px; white-space: nowrap; }
.msgrow { display: flex; height: 33px; background: #ffffcc; border-top: 1px solid #000; border-bottom: 2px solid #000; }
.msgrow p { flex: 1; padding-left: 512px; font: bold 12px/32px "Liberation Mono", monospace; }
.unit { background: #54cfb0; border-left: 2px solid #000; padding: 2px 2px 2px 6px; width: 80px; }
.unit .opt select { background: #54cfb0; border-color: #b4f4e4 #2c6e60 #2c6e60 #b4f4e4; }
.opt { position: relative; display: block; height: 100%; }
.opt select { display: block; width: 100%; height: 100%; background: var(--cy); border: 2px solid; border-color: var(--clt) var(--cdk) var(--cdk) var(--clt); padding-left: 4px; }
.opt::after { content: ""; position: absolute; right: 7px; top: 50%; margin-top: -3px; width: 12px; height: 6px; border: 2px solid; border-color: #cdf8f6 #2f7a78 #2f7a78 #cdf8f6; pointer-events: none; }
.inforow { height: 40px; background: #ffffcc; border-top: 2px solid #7a9a98; padding: 1px 2px 10px 0; }
.inforow p { height: 27px; background: #b4ffff; border: 1px solid #000; box-shadow: inset -4px -4px #5a9a9a, inset 0 3px #e0ffff; text-align: center; font: bold 12px/25px "Liberation Mono", monospace; padding-right: 16px; }

.win { position: absolute; display: flex; flex-direction: column; border: 1px solid #c8d4d8; border-radius: 7px 7px 5px 5px; padding: 0 6px 6px; box-shadow: 0 0 3px #000; }
.win header { height: 28px; display: flex; align-items: center; gap: 5px; }
.wc { margin: 0 0 auto auto; width: 47px; height: 19px; display: grid; place-items: center; border: 1px solid #b8c4d0; border-top: 0; border-radius: 0 0 5px 5px; background: rgba(255, 255, 255, .15); }
.wc.red { background: linear-gradient(#e8a090, #c83820 50%, #b02410 55%, #d85840); }
.client { flex: 1; display: flex; flex-direction: column; border: 1px solid #111; background: #54cfb0; min-height: 0; }
.client h2 { font: bold 15px/20px "Liberation Serif", serif; text-align: center; }

.sb { display: flex; background: var(--face); border: 2px solid; border-color: var(--dk) var(--lt) var(--lt) var(--dk); align-items: stretch; }
.sb b { flex: 1; border: 2px solid; border-color: var(--lt) var(--dk) var(--dk) var(--lt); }
.sb.v { width: 15px; flex-direction: column; }
.sb.v svg { width: 11px; height: 12px; }
.sb.h { height: 14px; }
.sb.h svg { width: 12px; height: 10px; }
.lrow { display: flex; gap: 4px; }
.lb { flex: 1; border: 2px solid; border-color: var(--dk) var(--lt) var(--lt) var(--dk); padding: 2px; overflow: hidden; min-width: 0; }
.lb li { white-space: pre; height: 15px; margin-bottom: 3px; line-height: 15px; }
.lb .on { background: #000; color: #54cfb0; }
.cy .lb .on { color: #9cdcdc; }
.dr { width: 29px; height: 29px; }
.dr span { width: 23px; height: 23px; border: 1px solid #000; font: 11px/11px "Liberation Serif", serif; display: flex; flex-direction: column; align-items: center; }
.dr i { width: 8px; height: 8px; border-radius: 50%; border: 1px solid #000; background: #1aee1a; }
.dr i.r { background: #ff1919; }
.un { width: 34px; }
.un span { width: 26px; font-size: 8px; line-height: 10px; }

.pop { left: 547px; top: 109px; width: 409px; height: 312px; padding-bottom: 5px; background: linear-gradient(100deg, #777 0, #999 90px, #151515 150px, #000 260px, #555 340px, #666 100%) top / 100% 28px no-repeat, linear-gradient(#666 28px, #888 60px, #ddd 95px, #111 97px, #000); }
.pop .client { background: #000; }
.poprow { display: flex; flex: 1; gap: 3px; min-height: 0; }
.view { flex: 1; border: 3px solid; border-color: #2c6e60 #b4f4e4 #b4f4e4 #2c6e60; background: #000; overflow: hidden; }
.view svg { width: 100%; height: 100%; }
.tools { display: flex; flex-direction: column; gap: 2px; padding: 1px 2px 0 0; }
.tools .btn { width: 33px; height: 33px; border: 2px solid; border-color: #70c8b4 #50a898 #50a898 #70c8b4; box-shadow: inset 2px 2px #cdf8f6, inset -2px -2px #4f8484; }
.pclose { background: #54cfb0; padding: 2px; height: 28px; margin: 1px 2px 1px 1px; }
.pclose .btn { width: 100%; height: 100%; }

.check { left: 1521px; top: 57px; width: 398px; height: 726px; background: linear-gradient(90deg, #8cc8dc 0, #90d0e4 60%, #9cd4e4 100%) top / 100% 28px no-repeat, linear-gradient(#b03850 0 180px, #101820 190px 540px, #c02030 560px 640px, #181818); }
.check header, .hist header { padding-left: 1px; }
.check .client { background: #54cfb0; }
.cmenu { background: var(--cy); height: 35px; border-bottom: 1px solid #000; }
.cmenu nav { width: 137px; height: 34px; border: 2px solid; border-color: var(--clt) var(--cdk) var(--cdk) var(--clt); outline: 1px solid #000; display: flex; justify-content: center; align-items: center; gap: 17px; font: bold 15px/18px "Liberation Serif", serif; }
.check h2 { background: var(--cy); line-height: 20px; font-size: 16px; border-bottom: 1px solid #000; }
.clist { flex: 1; display: flex; justify-content: space-between; padding: 2px 1px 2px 1px; min-height: 0; --face: #54cfb0; --lt: #b4f4e4; --dk: #2c6e60; }
.items { width: 356px; border: 1px solid #000; overflow: hidden; }
.clist > .sb { background: #44b096; }
.clist .sb b { background: var(--face); margin-top: 165px; }
.items article { height: 119px; background: var(--cy); border-bottom: 3px solid #000; display: flex; flex-direction: column; font-weight: normal; }
.r1 { display: flex; height: 29px; gap: 5px; padding-right: 2px; margin-bottom: 5px; }
.r1 label { display: flex; width: 161px; padding-left: 4px; font: bold 15px/27px "Liberation Serif", serif; white-space: nowrap; }
.r1 label input { width: 13px; height: 13px; margin: 4px 20px 0 0; border: 1px solid; border-color: #4f8484 #cdf8f6 #cdf8f6 #4f8484; position: relative; }
.r1 label input::after { content: ""; position: absolute; left: 3px; top: 0; width: 6px; height: 10px; border: solid #c00850; border-width: 0 3px 2px 0; transform: rotate(40deg); }
.r1 label svg { margin: 4px 5px 0 0; }
.erf { width: 44px; }
.fld { width: 104px; border: 2px solid; border-color: var(--cdk) var(--clt) var(--clt) var(--cdk); padding: 0 0 10px 5px; line-height: 16px; }
.q { width: 29px; }
.r2 { display: flex; gap: 4px; padding: 0 2px 0 3px; height: 23px; margin-bottom: 3px; }
.r2 .btn { flex: 1; font: bold 15px/18px "Liberation Serif", serif; }
.r3 { display: flex; height: 34px; gap: 5px; padding-left: 3px; align-items: center; }
.run, .mag { width: 29px; height: 29px; background: #54cfb0; border-color: #b4f4e4 #2c6e60 #2c6e60 #b4f4e4; }
.run svg { background: #000; }
.r3 p { flex: 1; text-align: center; line-height: 15px; white-space: nowrap; padding-right: 32px; }
.r3 b { width: 17px; align-self: stretch; background: #1aee1a; border: 1px solid #000; margin-left: -2px; text-align: center; font: bold 14px/30px "Liberation Sans", sans-serif; }
.r3 b.bad { background: #ff1919; }
.m { flex: 1; background: #ffffcc; border-top: 1px solid #000; padding-left: 4px; line-height: 20px; white-space: nowrap; }
.cclose { height: 27px; padding: 1px 3px 0 1px; background: var(--cy); border-top: 1px solid #2c6e60; }
.cclose .btn { width: 100%; height: 25px; font: bold 15px/18px "Liberation Serif", serif; }

.hist { left: 1217px; top: 249px; width: 477px; height: 574px; background: linear-gradient(100deg, #d03040 0, #e08088 80px, #c02838 120px, #0c0c0c 150px, #000 300px, #98bcc8 316px, #a0c4d0 100%) top / 100% 28px no-repeat, linear-gradient(90deg, #c00c18 0 8px, transparent 8px calc(100% - 8px), #86bcd4 0) top / 100% 540px no-repeat, linear-gradient(90deg, #c00c18 0 200px, #08080c 206px 430px, #c01828 450px); padding: 0 6px 5px; }
.hist .client { padding: 3px 0 0; }
.htop { display: flex; height: 288px; margin: 0 4px 0 3px; gap: 1px; }
.hleft { width: 103px; background: var(--cy); border: 1px solid #000; display: flex; flex-direction: column; border-top-width: 2px; }
.radios { border-bottom: 1px solid #000; height: 136px; padding: 1px 0 0 5px; }
.radios label { display: flex; align-items: center; height: 27px; gap: 6px; }
.radios input { width: 10px; height: 10px; margin: 0 1px 0 2px; transform: rotate(45deg); border: 2px solid; border-color: #cdf8f6 #70a0a0 #4f8484 #b0e0e0; }
.radios input:checked { background: #c00850; border-color: #4f8484 #e8ffff #e8ffff #4f8484; }
.hleft .lrow { height: 116px; padding-right: 0; }
.hleft .lb { padding: 4px 3px 0; }
.hleft .sb { width: 13px; }
.hleft .sb svg { width: 9px; }
.hleft .drs { display: flex; gap: 5px; padding: 2px; }
.hright { flex: 1; background: var(--cy); border: 2px solid; border-color: #4f8484 #000 #000 #4f8484; display: flex; flex-direction: column; min-width: 0; outline: 1px solid #000; outline-offset: -2px; }
.ttl { display: flex; justify-content: center; height: 24px; margin-top: 3px; }
.ttl em { background: #b4ffff; border: 1px solid #000; padding: 0 3px; line-height: 24px; height: 22px; box-shadow: 2px 2px #5f8484; white-space: nowrap; }
.bars { height: 141px; display: flex; align-items: flex-end; padding-left: 5px; border-bottom: 4px solid #000; }
.bars div { width: 40px; display: flex; flex-direction: column; }
.bars span { line-height: 16px; white-space: nowrap; text-align: center; height: 16px; width: 46px; margin-left: -1px; font-weight: normal; }
.bars i { background: #ffff19; border: 1px solid #000; border-bottom: 0; margin-right: -1px; position: relative; }
.bars .red i { background: #ff1919; }
.bars div:first-child span { color: #e01818; }
.lbls { display: flex; padding: 1px 0 0 5px; margin-bottom: 7px; }
.lbls div { width: 40px; height: 29px; background: #ffff19; border: 1px solid #000; border-right: 0; font: 15px/15px "Liberation Mono", monospace; padding: 3px 0 0 2px; white-space: nowrap; display: flex; flex-direction: column; }
.lbls div:last-child { border-right: 1px solid #000; }
.lbls .red { background: #ff1919; }
.lbls .hi { padding-left: 9px; }
.hright > .sb { margin: 0 1px 2px; height: 14px; }
.res { flex: 1; display: flex; border-top: 1px solid #000; min-height: 0; }
.res .lb { flex: none; width: 76px; padding: 2px 3px; }
.res .lb .on { margin-top: 1px; }
.res .sb { width: 13px; margin: 0 2px 0 1px; }
.res .sb svg { width: 9px; }
.sl { flex: 1; border-left: 1px solid #000; display: flex; flex-direction: column; text-align: center; padding: 2px 3px; }
.sl output { text-align: left; padding: 5px 0 0 15px; line-height: 17px; font-weight: normal; }
.sl input { width: 100%; height: 15px; margin-top: 1px; background: #84b8b8; border: 2px solid; border-color: #4f8484 #cdf8f6 #cdf8f6 #4f8484; }
.sl input::-webkit-slider-thumb { appearance: none; width: 30px; height: 11px; background: linear-gradient(90deg, transparent 14px, #4f8484 14px 15px, #cdf8f6 15px 16px, transparent 16px), #9cdcdc; border: 1px solid; border-color: #cdf8f6 #4f8484 #4f8484 #cdf8f6; }
.sash { height: 8px; border-bottom: 2px solid #2c6e60; margin-top: 1px; background: linear-gradient(#2c6e60, #2c6e60) 0 3px / 100% 1px no-repeat; display: flex; justify-content: flex-end; padding-right: 10px; }
.sash i { width: 10px; height: 8px; background: #54cfb0; border: 2px solid; border-color: #b4f4e4 #2c6e60 #2c6e60 #b4f4e4; }
.map { height: 164px; margin: 0 4px 0 3px; border: solid #222; border-width: 1px; display: flex; justify-content: center; align-items: center; box-shadow: 1px 2px #b4f4e4; background: repeating-linear-gradient(90deg, #844 0 5px, transparent 5px 8px) 3px 1px / 100% 1px no-repeat, repeating-linear-gradient(#844 0 5px, transparent 5px 8px) 3px 1px / 1px 100% no-repeat; }
.hinfo { display: flex; height: 45px; gap: 4px; padding: 1px 5px 0 4px; align-items: center; margin-top: 1px; }
.hinfo .dr { width: 30px; height: 37px; }
.hinfo p { flex: 1; height: 42px; line-height: 38px; background: var(--cy); border: 1px solid #000; padding-left: 3px; white-space: nowrap; margin-left: -1px; }
.xb { width: 38px; height: 38px; }
.hclose { flex: 1; padding: 2px; border-top: 1px solid #000; background: var(--cy); }
.hclose .btn { width: 100%; height: 100%; }

.rv { left: 3px; top: 637px; width: 510px; height: 403px; background: linear-gradient(90deg, #a0c8c8 0, #a4d0d0 110px, #68c8c0 120px 145px, #0018c0 156px, #0020d8 250px, #3048e0 100%) top / 100% 29px no-repeat, linear-gradient(#283848 0, #1428c0 40px, #0818a8 300px, #c8e4e4 350px); padding: 0 7px 5px 6px; }
.rv .client { background: #54cfb0; }
.rv h2 { height: 29px; border: 2px solid var(--cy); outline: 2px solid #2c6e60; outline-offset: -4px; line-height: 23px; border-bottom-width: 3px; }
.rvmid { display: flex; height: 262px; border: solid #000; border-width: 2px 0; }
.rl { width: 171px; border-right: 2px solid #000; display: flex; flex-direction: column; }
.rl .rh { display: flex; height: 29px; border-bottom: 2px solid #000; }
.rl .g { padding: 2px; }
.rl .g .btn { height: 24px; padding: 0 3px; }
.it { font-style: italic; font-weight: normal; }
.rl em { flex: 1; background: var(--cy); border: solid #000; border-width: 0 2px; text-align: center; line-height: 26px; }
.rl .lrow { height: 179px; }
.rl .lb { padding: 3px; }
.rl > .sb { margin: 3px 20px 2px 0; height: 15px; }
.rep { flex: 1; border-top: 1px solid #000; padding: 2px 2px 2px 6px; min-height: 0; }
.rr { flex: 1; display: flex; flex-direction: column; padding: 0 1px; min-width: 0; }
.rr .rh { display: flex; height: 29px; background: var(--cy); }
.cat { width: 207px; font-style: italic; }
.ms { line-height: 28px; width: 50px; }
.rr .rh .opt { flex: 1; margin: 1px 1px 1px 3px; height: 27px; }
.rr .lrow { height: 116px; }
.rr .lb { padding: 4px 2px 0; }
.hi3 { margin-bottom: 42px; }
.rr > .sb { margin: 3px 19px 2px 0; height: 15px; }
.nav { display: flex; gap: 4px; height: 24px; margin-bottom: 1px; }
.nav .btn { padding: 0 2px; flex: none; width: 44px; }
.nav .btn:first-child { width: 53px; }
.nav label { line-height: 23px; }
.nav input { flex: 1; min-width: 0; margin-right: 1px; border: 2px solid; border-color: #2c6e60 #b4f4e4 #b4f4e4 #2c6e60; padding: 0 0 4px 5px; }
.zoom { display: flex; height: 33px; }
.zb { display: flex; border: 1px solid #000; width: 221px; }
.az { width: 118px; margin-left: 5px; padding: 1px 0; }
.zb label { background: var(--cy); border-left: 1px solid #000; width: 28px; line-height: 30px; }
.gr { flex: 1; background: #1aee1a; padding: 1px 2px 1px 6px; }
.gr .opt select { background: #1aee1a; border-color: #a8ffa8 #187818 #187818 #a8ffa8; }
.sa { display: flex; gap: 3px; padding-left: 4px; line-height: 27px; white-space: nowrap; }
.sa input { width: 13px; height: 13px; margin-top: 7px; border: 1px solid; border-color: #b4f4e4 #2c6e60 #2c6e60 #b4f4e4; }
.rr .drs { display: flex; gap: 4px; justify-content: flex-end; padding: 2px; }
.ri { height: 20px; line-height: 19px; text-align: center; border-bottom: 1px solid #000; white-space: nowrap; }
.re { height: 21px; background: #ffffcc; border: solid #000; border-width: 1px 0; padding-left: 2px; line-height: 19px; }
.rb { flex: 1; background: var(--cy); display: flex; gap: 5px; padding: 2px; align-items: center; }
.cl { flex: 1; height: 29px; }
.ic { width: 29px; height: 29px; }
.i-chart { border: 3px solid #e01818; }

.taskbar { height: 40px; display: flex; align-items: center; gap: 4px; padding-left: 7px; background: linear-gradient(100deg, #0c2c58 0, #1c4478 400px, #0c3060 900px, #1c4a84 1040px, #08284e 1100px, #06305e 60%, #0a2444 100%); border-top: 1px solid #8aa; overflow: hidden; }
.orb { width: 49px; }
.task { width: 58px; height: 38px; display: flex; }
.task span { flex: 1; display: grid; place-items: center; border: 1px solid #a0b4cc; border-radius: 3px; background: linear-gradient(165deg, #8ca0bc 0, #58749c 40%, #1c3c6c 65%, #34588c); }
.task.stack span { margin-right: 4px; box-shadow: 2px 0 #203a60, 3px 0 #a0b4cc; }
.task.on span { background: linear-gradient(165deg, #e0e8f0, #a0b0c8 60%, #c0ccdc); }
.tray { margin-left: auto; display: flex; align-items: center; gap: 8px; }
time { color: #fff; font: 12px/18px "Open Sans", sans-serif; text-align: center; width: 72px; white-space: nowrap; margin-left: 8px; }
.show { width: 13px; height: 38px; border: 1px solid #7888a0; background: linear-gradient(120deg, #8090a8, #182c4c 60%); }
</style>
